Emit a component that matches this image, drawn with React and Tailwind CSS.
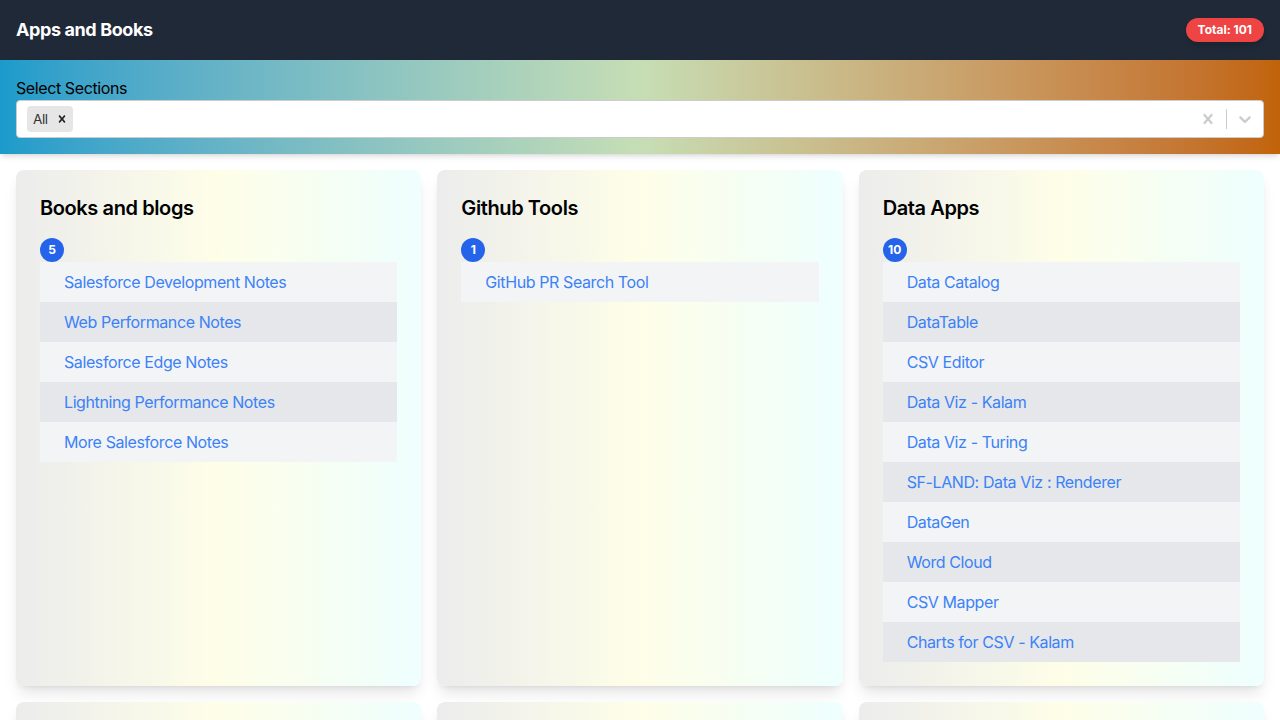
import React from "react";

const sections = [
  {
    title: "Books and blogs",
    items: [
      "Salesforce Development Notes",
      "Web Performance Notes",
      "Salesforce Edge Notes",
      "Lightning Performance Notes",
      "More Salesforce Notes",
    ],
  },
  {
    title: "Github Tools",
    items: ["GitHub PR Search Tool"],
  },
  {
    title: "Data Apps",
    items: [
      "Data Catalog",
      "DataTable",
      "CSV Editor",
      "Data Viz - Kalam",
      "Data Viz - Turing",
      "SF-LAND: Data Viz : Renderer",
      "DataGen",
      "Word Cloud",
      "CSV Mapper",
      "Charts for CSV - Kalam",
    ],
  },
  {
    title: "Salesforce Apps",
    items: ["Org Explorer", "Apex Runner", "SOQL Builder"],
  },
  {
    title: "Dev Tools",
    items: ["JSON Viewer", "Diff Tool", "Regex Tester"],
  },
  {
    title: "AI Apps",
    items: ["Prompt Lab", "Chat Notes"],
  },
];

const CrossIcon = ({ size = 20, className = "" }) => (
  <svg
    width={size}
    height={size}
    viewBox="0 0 20 20"
    className={className}
    fill="currentColor"
    aria-hidden="true"
  >
    <path d="M14.348 14.849c-0.469 0.469-1.229 0.469-1.697 0l-2.651-3.030-2.651 3.029c-0.469 0.469-1.229 0.469-1.697 0-0.469-0.469-0.469-1.229 0-1.697l2.758-3.15-2.759-3.152c-0.469-0.469-0.469-1.228 0-1.697s1.228-0.469 1.697 0l2.652 3.031 2.651-3.031c0.469-0.469 1.228-0.469 1.697 0s0.469 1.229 0 1.697l-2.758 3.152 2.758 3.15c0.469 0.469 0.469 1.229 0 1.698z" />
  </svg>
);

const ChevronIcon = () => (
  <svg width="20" height="20" viewBox="0 0 20 20" fill="currentColor" aria-hidden="true">
    <path d="M4.516 7.548c0.436-0.446 1.043-0.481 1.576 0l3.908 3.747 3.908-3.747c0.533-0.481 1.141-0.446 1.574 0 0.436 0.445 0.408 1.197 0 1.615-0.406 0.418-4.695 4.502-4.695 4.502-0.217 0.223-0.502 0.335-0.787 0.335s-0.57-0.112-0.789-0.335c0 0-4.287-4.084-4.695-4.502s-0.436-1.17 0-1.615z" />
  </svg>
);

const SectionCard = ({ section }) => (
  <div className="rounded-lg shadow-lg p-6 bg-gradient-to-r from-[#ececec] via-[#fefee8] to-[#eefffe]">
    <h2 className="text-xl font-semibold text-black mb-4">{section.title}</h2>
    <span className="flex items-center justify-center w-6 h-6 rounded-full bg-[#2563eb] text-white text-xs font-bold tracking-normal">
      {section.items.length}
    </span>
    <ul>
      {section.items.map((item, i) => (
        <li
          key={item}
          className={`px-6 py-2 ${i % 2 === 0 ? "bg-[#f3f4f6]" : "bg-[#e5e7eb]"}`}
        >
          <a href="#" className="text-[#3b82f6]">
            {item}
          </a>
        </li>
      ))}
    </ul>
  </div>
);

export default function App() {
  return (
    <div className="min-h-screen bg-white tracking-tight font-['Inter','Liberation_Sans',sans-serif]">
      {/* Header */}
      <header className="flex items-center justify-between bg-[#1f2937] px-4 py-4">
        <h1 className="text-lg font-bold text-white leading-7">Apps and Books</h1>
        <span className="rounded-full bg-[#ef4444] px-3 py-1 text-xs font-bold text-white tracking-normal shadow-md">
          Total: 101
        </span>
      </header>

      {/* Section picker */}
      <div className="p-4 shadow-md bg-gradient-to-r from-[#1a9bcb] via-[#c6deb5] to-[#c16307]">
        <label className="block text-base text-black">Select Sections</label>
        <div className="flex items-center h-[38px] bg-white border border-[#cccccc] rounded">
          <div className="flex flex-1 items-center px-2 py-0.5">
            <div className="flex items-center m-0.5 h-[26px] bg-[#e6e6e6] rounded-sm">
              <span className="pl-1.5 pr-[3px] text-[13.6px] text-[#333333]">All</span>
              <span className="flex items-center px-1 text-[#222222]">
                <CrossIcon size={14} />
              </span>
            </div>
          </div>
          <div className="flex items-center self-stretch">
            <span className="flex items-center p-2 text-[#cccccc]">
              <CrossIcon />
            </span>
            <span className="w-px self-stretch my-2 bg-[#cccccc]" />
            <span className="flex items-center p-2 text-[#cccccc]">
              <ChevronIcon />
            </span>
          </div>
        </div>
      </div>

      {/* Cards */}
      <main className="grid grid-cols-3 gap-4 p-4">
        {sections.map((s) => (
          <SectionCard key={s.title} section={s} />
        ))}
      </main>
    </div>
  );
}
